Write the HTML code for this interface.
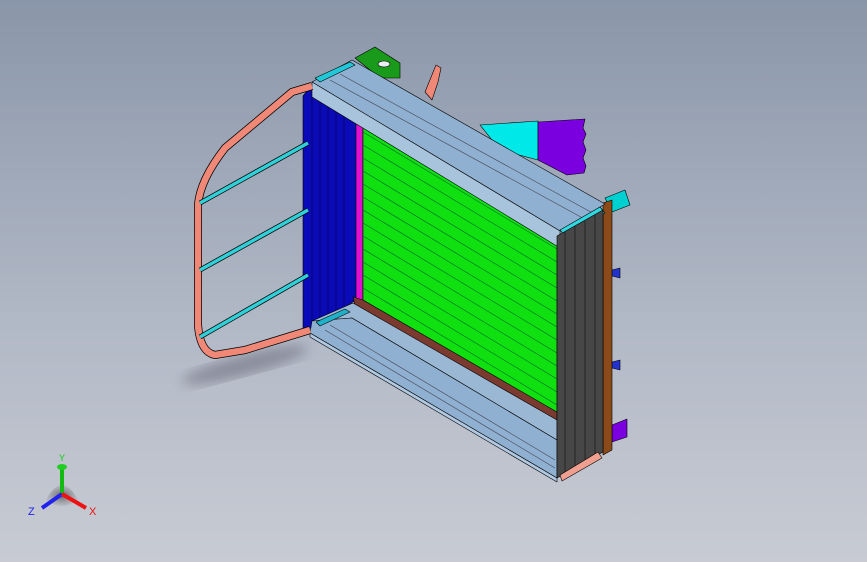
<!DOCTYPE html>
<html><head><style>
body{margin:0;width:867px;height:562px;overflow:hidden;background:linear-gradient(#8a96a9,#b3bac7 60%,#c8cbd3);font-family:"Liberation Sans",sans-serif}
svg{position:absolute;left:0;top:0}
</style></head><body>
<svg width="867" height="562" viewBox="0 0 867 562">
<defs><filter id="b"><feGaussianBlur stdDeviation="6"/></filter>
<radialGradient id="g"><stop offset="0" stop-color="#333"/><stop offset="1" stop-color="#888" stop-opacity="0.3"/></radialGradient></defs>
<ellipse cx="245" cy="365" rx="65" ry="10" transform="rotate(-15 245 365)" fill="#556" opacity="0.45" filter="url(#b)"/>
<g stroke="#000" stroke-width="0.6" stroke-linejoin="round">
<!-- back pieces -->
<polygon points="425,92 436,65 441,68 438,82 432,100" fill="#f08878"/>
<polygon points="480,125 538,121 538,160 500,150" fill="#00e8e8"/>
<polygon points="538,122 585,119 583,128 586,134 583,142 586,150 583,158 586,166 584,173 567,175 538,160" fill="#7a00e0"/>
<polygon points="355,58 375,47 400,63 400,78 380,78" fill="#1a9a1a"/>
<ellipse cx="384" cy="64" rx="6" ry="3" fill="#e8eef4"/>
<polygon points="605,198 625,190 630,205 612,212" fill="#00d0d0"/>
<polygon points="612,425 627,419 627,437 612,442" fill="#7a00e0"/>
<polygon points="612,270 620,268 620,278 612,276" fill="#2233cc"/>
<polygon points="612,362 620,360 620,370 612,368" fill="#2233cc"/>
<!-- brown back strip -->
<polygon points="603,203 612,200 612,450 603,455" fill="#8b4a18"/>
<!-- blue panel -->
<polygon points="303,96 312,85 356,113 356,300 312,328 303,329" fill="#0a0ab8"/>
<g stroke="#001" stroke-width="0.5" fill="none">
<line x1="312" y1="90" x2="312" y2="326"/><line x1="320" y1="96" x2="320" y2="321"/><line x1="328" y1="100" x2="328" y2="316"/><line x1="336" y1="104" x2="336" y2="311"/><line x1="344" y1="108" x2="344" y2="306"/>
</g>
<polygon points="356,113 363,118 363,300 356,300" fill="#e010d0"/>
<!-- green panel -->
<polygon points="363,118 557,236 557,415 363,300" fill="#10e010"/>
<g stroke="#063" stroke-width="0.6">
<line x1="363" y1="132" x2="557" y2="249"/><line x1="363" y1="145" x2="557" y2="262"/><line x1="363" y1="158" x2="557" y2="275"/><line x1="363" y1="171" x2="557" y2="288"/><line x1="363" y1="184" x2="557" y2="301"/><line x1="363" y1="197" x2="557" y2="314"/><line x1="363" y1="210" x2="557" y2="327"/><line x1="363" y1="223" x2="557" y2="340"/><line x1="363" y1="236" x2="557" y2="353"/><line x1="363" y1="249" x2="557" y2="366"/><line x1="363" y1="262" x2="557" y2="379"/><line x1="363" y1="275" x2="557" y2="392"/><line x1="363" y1="288" x2="557" y2="405"/>
</g>
<!-- brown bottom strip -->
<polygon points="353,297 363,300 557,412 557,422 355,305" fill="#7a3a30"/>
<!-- top beam -->
<polygon points="312,82 352,60 605,204 560,231" fill="#8fb0d0"/>
<polygon points="312,82 560,231 560,248 312,97" fill="#a8c4dc"/>
<line x1="330" y1="80" x2="590" y2="222" stroke="#445"/>
<line x1="340" y1="74" x2="598" y2="216" stroke="#445"/>
<polygon points="315,78 350,62 355,65 320,82" fill="#20c8d8"/>
<polygon points="560,230 600,207 605,213 565,236" fill="#30d8e0"/>
<!-- bottom beam -->
<polygon points="312,321 353,303 557,420 557,440 352,318" fill="#9ab8d4"/>
<polygon points="312,321 352,318 557,440 557,478 310,333" fill="#8fb0d0"/>
<polygon points="310,333 557,478 557,482 310,337" fill="#b0c8e0"/>
<line x1="330" y1="325" x2="555" y2="460" stroke="#445"/>
<line x1="325" y1="330" x2="555" y2="468" stroke="#445"/>
<polygon points="316,322 345,309 350,312 320,326" fill="#20b0c8"/>
<!-- dark right panel -->
<polygon points="557,236 603,210 603,452 557,478" fill="#474747"/>
<g stroke="#111" fill="none"><line x1="565" y1="232" x2="565" y2="474"/><line x1="575" y1="226" x2="575" y2="468"/><line x1="585" y1="221" x2="585" y2="462"/><line x1="595" y1="215" x2="595" y2="457"/></g>
<polygon points="560,475 598,452 602,458 562,481" fill="#f0a090"/>
<!-- handrail -->
<path d="M312,86 L292,92 L225,148 Q200,180 198,205 L198,325 Q200,352 215,355 L245,350 L310,330" fill="none" stroke="#000" stroke-width="8"/>
<path d="M312,86 L292,92 L225,148 Q200,180 198,205 L198,325 Q200,352 215,355 L245,350 L310,330" fill="none" stroke="#f08878" stroke-width="6.5"/>
<g stroke="#000" stroke-width="5"><line x1="200" y1="203" x2="308" y2="143"/><line x1="200" y1="270" x2="308" y2="210"/><line x1="200" y1="337" x2="308" y2="275"/></g>
<g stroke="#30d0d8" stroke-width="3.5"><line x1="200" y1="203" x2="308" y2="143"/><line x1="200" y1="270" x2="308" y2="210"/><line x1="200" y1="337" x2="308" y2="275"/></g>
</g>
<!-- triad -->
<path d="M46,500 Q62,470 78,500 Q62,512 46,500Z" fill="url(#g)" opacity="0.7"/>
<line x1="62" y1="494" x2="62" y2="466" stroke="#1b1" stroke-width="4"/>
<ellipse cx="62" cy="467" rx="5" ry="3" fill="#2c2"/>
<line x1="62" y1="494" x2="42" y2="508" stroke="#22e" stroke-width="4"/>
<line x1="62" y1="494" x2="86" y2="508" stroke="#e11" stroke-width="4"/>
<text x="59" y="461" font-size="9" fill="#1c1">Y</text>
<text x="28" y="515" font-size="11" fill="#22e">Z</text>
<text x="89" y="515" font-size="11" fill="#e11">X</text>
</svg>
</body></html>
